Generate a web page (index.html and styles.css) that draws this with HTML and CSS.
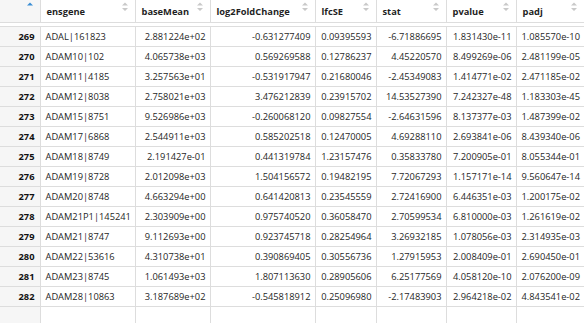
FILE: index.html
```html
<!DOCTYPE html>
<html>
<head>
<meta charset="utf-8">
<link rel="stylesheet" href="styles.css">
</head>
<body>
<div class="viewer">
  <table class="grid head">
    <colgroup><col class="c0"><col class="c1"><col class="c2"><col class="c3"><col class="c4"><col class="c5"><col class="c6"><col class="c7"></colgroup>
    <tr>
      <th class="rn"><div class="hc"><span></span><svg class="sort" width="6" height="10" viewBox="0 0 6 10"><path d="M0 3.5 L3 0.5 L6 3.5 Z" fill="#3a8ed4"/></svg></div></th>
      <th><div class="hc"><span>ensgene</span><svg class="sort" width="6" height="10" viewBox="0 0 6 10"><path d="M0 3.5 L3 0.5 L6 3.5 Z M0 6 L3 9 L6 6 Z" fill="#c9c9c9"/></svg></div></th>
      <th><div class="hc"><span>baseMean</span><svg class="sort" width="6" height="10" viewBox="0 0 6 10"><path d="M0 3.5 L3 0.5 L6 3.5 Z M0 6 L3 9 L6 6 Z" fill="#c9c9c9"/></svg></div></th>
      <th><div class="hc"><span>log2FoldChange</span><svg class="sort" width="6" height="10" viewBox="0 0 6 10"><path d="M0 3.5 L3 0.5 L6 3.5 Z M0 6 L3 9 L6 6 Z" fill="#c9c9c9"/></svg></div></th>
      <th><div class="hc"><span>lfcSE</span><svg class="sort" width="6" height="10" viewBox="0 0 6 10"><path d="M0 3.5 L3 0.5 L6 3.5 Z M0 6 L3 9 L6 6 Z" fill="#c9c9c9"/></svg></div></th>
      <th><div class="hc"><span>stat</span><svg class="sort" width="6" height="10" viewBox="0 0 6 10"><path d="M0 3.5 L3 0.5 L6 3.5 Z M0 6 L3 9 L6 6 Z" fill="#c9c9c9"/></svg></div></th>
      <th><div class="hc"><span>pvalue</span><svg class="sort" width="6" height="10" viewBox="0 0 6 10"><path d="M0 3.5 L3 0.5 L6 3.5 Z M0 6 L3 9 L6 6 Z" fill="#c9c9c9"/></svg></div></th>
      <th><div class="hc"><span>padj</span><svg class="sort" width="6" height="10" viewBox="0 0 6 10"><path d="M0 3.5 L3 0.5 L6 3.5 Z M0 6 L3 9 L6 6 Z" fill="#c9c9c9"/></svg></div></th>
    </tr>
  </table>
  <table class="grid body">
    <colgroup><col class="c0"><col class="c1"><col class="c2"><col class="c3"><col class="c4"><col class="c5"><col class="c6"><col class="c7"></colgroup>
    <tr><td class="rn">269</td><td class="txt">ADAL|161823</td><td>2.881224e+02</td><td>-0.631277409</td><td>0.09395593</td><td>-6.71886695</td><td>1.831430e-11</td><td>1.085570e-10</td></tr>
    <tr><td class="rn">270</td><td class="txt">ADAM10|102</td><td>4.065738e+03</td><td>0.569269588</td><td>0.12786237</td><td>4.45220570</td><td>8.499269e-06</td><td>2.481199e-05</td></tr>
    <tr><td class="rn">271</td><td class="txt">ADAM11|4185</td><td>3.257563e+01</td><td>-0.531917947</td><td>0.21680046</td><td>-2.45349083</td><td>1.414771e-02</td><td>2.471185e-02</td></tr>
    <tr><td class="rn">272</td><td class="txt">ADAM12|8038</td><td>2.758021e+03</td><td>3.476212839</td><td>0.23915702</td><td>14.53527390</td><td>7.242327e-48</td><td>1.183303e-45</td></tr>
    <tr><td class="rn">273</td><td class="txt">ADAM15|8751</td><td>9.526986e+03</td><td>-0.260068120</td><td>0.09827554</td><td>-2.64631596</td><td>8.137377e-03</td><td>1.487399e-02</td></tr>
    <tr><td class="rn">274</td><td class="txt">ADAM17|6868</td><td>2.544911e+03</td><td>0.585202518</td><td>0.12470005</td><td>4.69288110</td><td>2.693841e-06</td><td>8.439340e-06</td></tr>
    <tr><td class="rn">275</td><td class="txt">ADAM18|8749</td><td>2.191427e-01</td><td>0.441319784</td><td>1.23157476</td><td>0.35833780</td><td>7.200905e-01</td><td>8.055344e-01</td></tr>
    <tr><td class="rn">276</td><td class="txt">ADAM19|8728</td><td>2.012098e+03</td><td>1.504156572</td><td>0.19482195</td><td>7.72067293</td><td>1.157171e-14</td><td>9.560647e-14</td></tr>
    <tr><td class="rn">277</td><td class="txt">ADAM20|8748</td><td>4.663294e+00</td><td>0.641420813</td><td>0.23545559</td><td>2.72416900</td><td>6.446351e-03</td><td>1.200175e-02</td></tr>
    <tr><td class="rn">278</td><td class="txt">ADAM21P1|145241</td><td>2.303909e+00</td><td>0.975740520</td><td>0.36058470</td><td>2.70599534</td><td>6.810000e-03</td><td>1.261619e-02</td></tr>
    <tr><td class="rn">279</td><td class="txt">ADAM21|8747</td><td>9.112693e+00</td><td>0.923745718</td><td>0.28254964</td><td>3.26932185</td><td>1.078056e-03</td><td>2.314935e-03</td></tr>
    <tr><td class="rn">280</td><td class="txt">ADAM22|53616</td><td>4.310738e+01</td><td>0.390869405</td><td>0.30556736</td><td>1.27915953</td><td>2.008409e-01</td><td>2.690450e-01</td></tr>
    <tr><td class="rn">281</td><td class="txt">ADAM23|8745</td><td>1.061493e+03</td><td>1.807113630</td><td>0.28905606</td><td>6.25177569</td><td>4.058120e-10</td><td>2.076200e-09</td></tr>
    <tr><td class="rn">282</td><td class="txt">ADAM28|10863</td><td>3.187689e+02</td><td>-0.545818912</td><td>0.25096980</td><td>-2.17483903</td><td>2.964218e-02</td><td>4.843541e-02</td></tr>
    <tr><td class="rn"></td><td class="txt"></td><td></td><td></td><td></td><td></td><td></td><td></td></tr>
  </table>
</div>
</body>
</html>
```
FILE: styles.css
```css
html, body {
  margin: 0;
  padding: 0;
  background: #ffffff;
  overflow: hidden;
}
.viewer {
  width: 584px;
  height: 323px;
  overflow: hidden;
  font-family: "Segoe UI", "Open Sans", "Noto Sans", sans-serif;
  font-size: 9.3px;
  color: #1f1f1f;
}
.grid {
  width: 584px;
  table-layout: fixed;
  border-collapse: collapse;
}
.c0 { width: 40px; }
.c1 { width: 95px; }
.c2 { width: 75px; }
.c3 { width: 105px; }
.c4 { width: 61px; }
.c5 { width: 70px; }
.c6 { width: 70px; }
.c7 { width: 68px; }
.grid th, .grid td {
  border: 1px solid #dddddd;
  border-top: none;
  white-space: nowrap;
  overflow: hidden;
}
.grid th:first-child, .grid td:first-child { border-left: none; }
.head th {
  height: 22px;
  padding: 0 7px 0 6px;
  text-align: left;
  font-weight: 700;
  background: #ffffff;
  vertical-align: middle;
}
.head th.rn { background: #f6f6f6; }
.hc {
  display: flex;
  align-items: center;
  justify-content: space-between;
}
.sort { flex: none; margin-top: -8px; }
.body {
  margin-top: 3px;
  border-top: 1px solid #dddddd;
}
.body td {
  height: 19px;
  padding: 0 4px 0 5px;
  text-align: right;
  vertical-align: middle;
  line-height: 19px;
}
.body td.txt { text-align: left; }
.body td.rn {
  background: #f6f6f6;
  font-weight: 700;
  color: #111111;
  padding-right: 5px;
}
```
